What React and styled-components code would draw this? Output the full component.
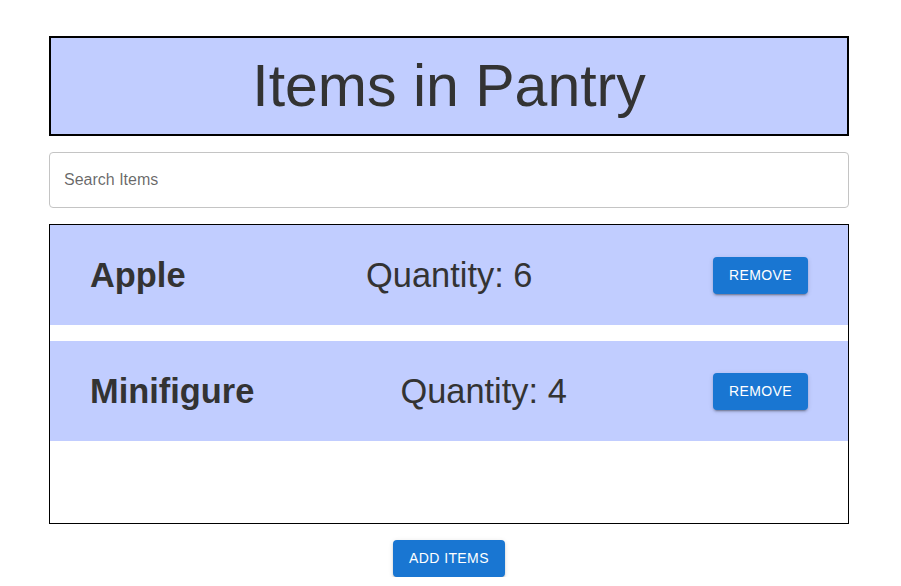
import React, { useState } from 'react';
import styled, { createGlobalStyle } from 'styled-components';

const GlobalStyle = createGlobalStyle`
  body {
    margin: 0;
    background: #fff;
    font-family: "Liberation Sans", Arial, sans-serif;
  }
`;

const Page = styled.div`
  width: 100%;
  box-sizing: border-box;
  display: flex;
  justify-content: center;
  padding-top: 36px;
  padding-right: 3px;
`;

const Column = styled.div`
  width: 800px;
  display: flex;
  flex-direction: column;
  align-items: center;
  gap: 16px;
`;

const Header = styled.div`
  box-sizing: border-box;
  width: 800px;
  height: 100px;
  border: 2px solid #000;
  background-color: #c1cdff;
  display: flex;
  align-items: center;
  justify-content: center;
`;

const Title = styled.h2`
  margin: 0;
  color: #333;
  font-size: 59px;
  font-weight: 400;
  line-height: 1;
`;

const SearchField = styled.input`
  box-sizing: border-box;
  width: 800px;
  height: 56px;
  border: 1px solid #c4c4c4;
  border-radius: 4px;
  padding: 0 14px;
  font-family: "Liberation Sans", Arial, sans-serif;
  font-size: 16px;
  color: #333;
  outline: none;

  &::placeholder {
    color: rgba(0, 0, 0, 0.6);
  }
`;

const ListBox = styled.div`
  box-sizing: border-box;
  width: 800px;
  height: 300px;
  border: 1px solid #000;
  overflow: auto;
  display: flex;
  flex-direction: column;
  gap: 16px;
`;

const Row = styled.div`
  flex: 0 0 100px;
  box-sizing: border-box;
  padding: 0 40px;
  background-color: #c1cdff;
  display: flex;
  align-items: center;
  justify-content: space-between;
`;

const ItemText = styled.h3`
  margin: 0;
  color: #333;
  font-size: 34.4px;
  font-weight: ${(p) => (p.$bold ? 700 : 400)};
  line-height: 1;
`;

const Button = styled.button`
  border: none;
  border-radius: 4px;
  background-color: #1976d2;
  color: #fff;
  font-family: "Liberation Sans", Arial, sans-serif;
  font-size: 14px;
  letter-spacing: 0.4px;
  text-transform: uppercase;
  padding: 0 16px;
  height: 37px;
  line-height: 37px;
  cursor: pointer;
  box-shadow: 0px 3px 1px -2px rgba(0, 0, 0, 0.2),
    0px 2px 2px 0px rgba(0, 0, 0, 0.14), 0px 1px 5px 0px rgba(0, 0, 0, 0.12);
`;

const App = () => {
  const [search, setSearch] = useState('');
  const pantry = [
    { name: 'Apple', quantity: 6 },
    { name: 'Minifigure', quantity: 4 },
  ];

  const shown = pantry.filter((item) =>
    item.name.toLowerCase().includes(search.toLowerCase())
  );

  return (
    <Page>
      <GlobalStyle />
      <Column>
        <Header>
          <Title>Items in Pantry</Title>
        </Header>
        <SearchField
          placeholder="Search Items"
          value={search}
          onChange={(e) => setSearch(e.target.value)}
        />
        <ListBox>
          {shown.map((item) => (
            <Row key={item.name}>
              <ItemText $bold>{item.name}</ItemText>
              <ItemText>Quantity: {item.quantity}</ItemText>
              <Button>Remove</Button>
            </Row>
          ))}
        </ListBox>
        <Button>Add Items</Button>
      </Column>
    </Page>
  );
};

export default App;
